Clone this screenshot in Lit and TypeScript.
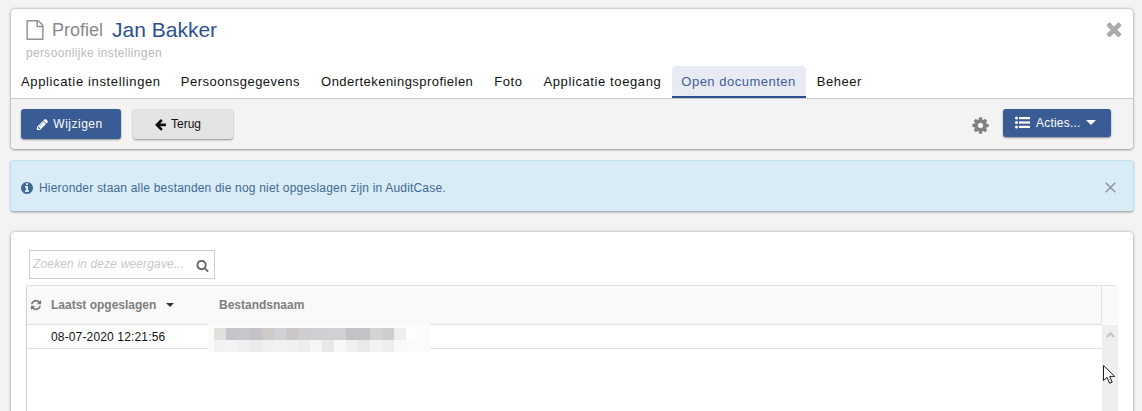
import { LitElement, html, css, svg } from "lit";
import { customElement } from "lit/decorators.js";

const P = {
  file: "M1596 380q28 28 48 76t20 88v1152q0 40-28 68t-68 28h-1344q-40 0-68-28t-28-68v-1600q0-40 28-68t68-28h896q40 0 88 20t76 48zm-444-244v376h376q-10-29-22-41l-313-313q-12-12-41-22zm384 1528v-1024h-416q-40 0-68-28t-28-68v-416h-768v1536h1280z",
  times: "M1490 1322q0 40-28 68l-136 136q-28 28-68 28t-68-28l-294-294-294 294q-28 28-68 28t-68-28l-136-136q-28-28-28-68t28-68l294-294-294-294q-28-28-28-68t28-68l136-136q28-28 68-28t68 28l294 294 294-294q28-28 68-28t68 28l136 136q28 28 28 68t-28 68l-294 294 294 294q28 28 28 68z",
  arrow: "M1664 896v128q0 53-32.5 90.5t-84.5 37.5h-704l293 294q38 36 38 90t-38 90l-75 76q-37 37-90 37-52 0-91-37l-651-652q-37-37-37-90 0-52 37-91l651-650q38-38 91-38 52 0 90 38l75 74q38 38 38 91t-38 91l-293 293h704q52 0 84.5 37.5t32.5 90.5z",
  pencil: "M491 1536l91-91-235-235-91 91v107h128v128h107zm523-928q0-22-22-22-10 0-17 7l-542 542q-7 7-7 17 0 22 22 22 10 0 17-7l542-542q7-7 7-17zm-54-192l416 416-832 832h-416v-416zm683 96q0 53-37 90l-166 166-416-416 166-165q36-38 90-38 53 0 91 38l235 234q37 39 37 91z",
  cog: "M1152 896q0-106-75-181t-181-75-181 75-75 181 75 181 181 75 181-75 75-181zm512-109v222q0 12-8 23t-20 13l-185 28q-19 54-39 91 35 50 107 138 10 12 10 25t-9 23q-27 37-99 108t-94 71q-12 0-26-9l-138-108q-44 23-91 38-16 136-29 186-7 28-36 28h-222q-14 0-24.5-8.5t-11.5-21.5l-28-184q-49-16-90-37l-141 107q-10 9-25 9-14 0-25-11-126-114-165-168-7-10-7-23 0-12 8-23 15-21 51-66.5t54-70.5q-27-50-41-99l-183-27q-13-2-21-12.5t-8-23.5v-222q0-12 8-23t19-13l186-28q14-46 39-92-40-57-107-138-10-12-10-24 0-10 9-23 26-36 98.5-107.5t94.5-71.5q13 0 26 10l138 107q44-23 91-38 16-136 29-186 7-28 36-28h222q14 0 24.5 8.5t11.5 21.5l28 184q49 16 90 37l142-107q9-9 24-9 13 0 25 10 129 119 165 170 7 8 7 22 0 12-8 23-15 21-51 66.5t-54 70.5q26 50 41 98l183 28q13 2 21 12.5t8 23.5z",
  info: "M1152 1376v-160q0-14-9-23t-23-9h-96v-512q0-14-9-23t-23-9h-320q-14 0-23 9t-9 23v160q0 14 9 23t23 9h96v320h-96q-14 0-23 9t-9 23v160q0 14 9 23t23 9h448q14 0 23-9t9-23zm-128-896v-160q0-14-9-23t-23-9h-192q-14 0-23 9t-9 23v160q0 14 9 23t23 9h192q14 0 23-9t9-23zm640 416q0 209-103 385.5t-279.5 279.5-385.5 103-385.5-103-279.5-279.5-103-385.5 103-385.5 279.5-279.5 385.5-103 385.5 103 279.5 279.5 103 385.5z",
  search: "M1216 832q0-185-131.5-316.5t-316.5-131.5-316.5 131.5-131.5 316.5 131.5 316.5 316.5 131.5 316.5-131.5 131.5-316.5zm512 832q0 52-38 90t-90 38q-54 0-90-38l-343-342q-179 124-399 124-143 0-273.5-55.5t-225-150-150-225-55.5-273.5 55.5-273.5 150-225 225-150 273.5-55.5 273.5 55.5 225 150 150 225 55.5 273.5q0 220-124 399l343 343q37 37 37 90z",
  refresh: "M1639 1056q0 5-1 7-64 268-268 434.5t-478 166.5q-146 0-282.5-55t-243.5-157l-129 129q-19 19-45 19t-45-19-19-45v-448q0-26 19-45t45-19h448q26 0 45 19t19 45-19 45l-137 137q71 66 161 102t187 36q134 0 250-65t186-179q11-17 53-117 8-23 30-23h192q13 0 22.5 9.5t9.5 22.5zm25-800v448q0 26-19 45t-45 19h-448q-26 0-45-19t-19-45 19-45l138-138q-148-137-349-137-134 0-250 65t-186 179q-11 17-53 117-8 23-30 23h-199q-13 0-22.5-9.5t-9.5-22.5v-7q65-268 270-434.5t480-166.5q146 0 284 55.5t245 156.5l130-129q19-19 45-19t45 19 19 45z",
};

const icon = (d: string, size: number, color: string, box = "0 0 1792 1792") =>
  html`<svg class="ico" width=${size} height=${size} viewBox=${box} style="color:${color}"><path fill="currentColor" d=${d}></path></svg>`;

const TABS: [string, number][] = [
  ["Applicatie instellingen", 0.64],
  ["Persoonsgegevens", 0.5],
  ["Ondertekeningsprofielen", 0.46],
  ["Foto", 0.55],
  ["Applicatie toegang", 0.6],
  ["Open documenten", 0.5],
  ["Beheer", 0.55],
];
const MOSAIC = [
  ["#e0e0dd", "#c6c5cc", "#c8c7cc", "#c4c3c7", "#cdcac9", "#d0d2d7", "#cbc7c9", "#cfcdd1", "#d0cfd3", "#d1d0d3", "#d1d0d3", "#c4c2c6", "#c5c3c6", "#d3d3d6", "#cfcdcd", "#eeeef2", "#fdfdfd"],
  ["#f2f2f2", "#f3f3f3", "#efefef", "#ebebef", "#f0f0f0", "#f2f2f3", "#f0f0f1", "#ededee", "#f6f6f6", "#e8e8e8", "#f8f8f8", "#f0f0f1", "#e9e9e9", "#f2f2f2", "#eeeeee", "#f9f9f9", "#fbfbfb"],
];

@customElement("app-root")
export class AppRoot extends LitElement {
  static styles = css`
    :host { display: block; height: 411px; overflow: hidden; background: #f3f3f3; font-family: "Liberation Sans", Arial, sans-serif; position: relative; }
    * { box-sizing: border-box; }
    .ico { display: block; flex: none; }
    .card { background: #fff; border-radius: 4px; margin: 0 9px 0 11px; box-shadow: 0 0 3px rgba(0,0,0,.35), 0 1px 2px rgba(0,0,0,.25); }
    .head { margin-top: 9px; display: block; overflow: hidden; }
    .top { position: relative; height: 57px; padding: 10px 0 0 14px; }
    .title { display: flex; align-items: center; height: 22px; }
    .profiel { font-size: 18px; color: #8a8a8a; margin-left: 7px; }
    .name { font-size: 21px; color: #2d5190; margin-left: 9px; }
    .sub { font-size: 12px; letter-spacing: .34px; color: #bbb; margin: 5px 0 0 1px; line-height: 14px; }
    .close { position: absolute; right: 8px; top: 9px; }
    .tabs { display: flex; height: 32px; border-bottom: 1px solid #c8c8c8; box-sizing: content-box; }
    .tab { font-size: 13px; color: #111; padding: 0 10px; line-height: 32px; height: 32px; margin-right: 1px; white-space: nowrap; }
    .tab:first-child { margin-right: 0; }
    .tab.on { background: #e9ebf4; color: #3f5ea0; border-bottom: 2px solid #2b4e8e; border-radius: 4px 4px 0 0; padding: 0 10px 0 9px; }
    .bar { background: #f3f3f3; height: 50px; display: flex; align-items: flex-start; padding: 10px 22px 0 10px; }
    .btn { display: flex; align-items: center; justify-content: center; gap: 4px; width: 100px; height: 30px; border-radius: 3px; font-size: 12px; box-shadow: 0 1px 2px rgba(0,0,0,.4); }
    .pri { background: #3a5c94; color: #fff; letter-spacing: .5px; padding-right: 3px; }
    .sec { background: #e4e4e4; color: #111; margin-left: 12px; gap: 4px; padding-right: 11px; }
    .spacer { flex: 1; }
    .gear { margin: 7px 13px 0 0; }
    .acts { width: 108px; height: 28px; justify-content: flex-start; padding: 0 0 1px 12px; gap: 6px; letter-spacing: .2px; }
    .caret { width: 0; height: 0; border-left: 5px solid transparent; border-right: 5px solid transparent; border-top: 5px solid currentColor; }
    .acts .caret { margin-left: 0; }
    .alert { margin: 11px 8px 0 10px; height: 52px; background: #d9ecf6; border: 1px solid #bfe3f2; border-bottom-color: #a9b5bb; border-radius: 4px; display: flex; align-items: center; padding: 3px 17px 0 9px; color: #3f6a94; font-size: 12px; letter-spacing: .19px; box-shadow: 0 1px 2px rgba(0,0,0,.2); }
    .alert span { margin-left: 5px; flex: 1; }
    .alert svg.x { display: block; }
    .panel { margin-top: 20px; height: 300px; padding: 18px 15px 0 15px; }
    .search { margin-left: 3px; width: 186px; height: 29px; border: 1px solid #ccc; display: flex; align-items: center; padding: 0 5px 0 3px; justify-content: space-between; }
    .search i { font-size: 12px; letter-spacing: .15px; color: #c8c8c8; white-space: nowrap; margin-top: -2px; }
    .search .ico { margin-top: 2px; }
    .grid { margin-top: 6px; border-left: 1px solid #d0d0d0; border-top: 1px solid #e2e2e2; border-radius: 3px 3px 0 0; position: relative; height: 200px; }
    .ghead { height: 39px; background: #f9f9f9; display: flex; align-items: center; border-bottom: 1px solid #e2e2e2; font-size: 12px; font-weight: bold; color: #7f7f7f; margin-right: 16px; border-right: 1px solid #e2e2e2; padding-left: 3px; position: relative; }
    .gcorner { position: absolute; right: -17px; top: 0; width: 16px; height: 38px; background: #f9f9f9; }
    .col1 { width: 177px; display: flex; align-items: center; }
    .col1 b { margin-left: 9px; font-weight: bold; }
    .col1 .caret { margin-left: 10px; border-top-color: #333; border-width: 4px 4px 0 4px; border-left-color: transparent; border-right-color: transparent; }
    .grow { position: relative; height: 24px; margin-right: 16px; border-bottom: 1px solid #e2e2e2; font-size: 12px; color: #111; line-height: 25px; padding-left: 24px; letter-spacing: .15px; }
    .scroll { position: absolute; right: 0; top: 39px; width: 16px; height: 200px; background: #eee; display: flex; justify-content: center; padding-top: 7px; }
    .mosaic { position: absolute; left: 181px; top: -2px; width: 222px; height: 29px; background: #fbfbfb; padding: 5px 0 0 6px; }
    .mrow { display: flex; height: 12px; }
    .mrow div { width: 12px; height: 12px; }
    .cursor { position: absolute; left: 1103px; top: 365px; }
  `;

  render() {
    return html`
      <div class="card head">
        <div class="top">
          <div class="title">
            ${icon(P.file, 20, "#8f8f8f")}
            <span class="profiel">Profiel</span><span class="name">Jan Bakker</span>
          </div>
          <div class="sub">persoonlijke instellingen</div>
          <div class="close">${icon(P.times, 22, "#aaa")}</div>
        </div>
        <div class="tabs">
          ${TABS.map(([t, ls]) => html`<div class="tab ${t === "Open documenten" ? "on" : ""}" style="letter-spacing:${ls}px">${t}</div>`)}
        </div>
        <div class="bar">
          <div class="btn pri">${icon(P.pencil, 13, "#fff")}<span>Wijzigen</span></div>
          <div class="btn sec">${icon(P.arrow, 13, "#111")}<span>Terug</span></div>
          <div class="spacer"></div>
          <div class="gear">${icon(P.cog, 19, "#808080")}</div>
          <div class="btn pri acts">
            <svg class="ico" width="15" height="13" viewBox="0 0 15 13" fill="#fff">
              ${svg`<circle cx="1.5" cy="2" r="1.5"/><circle cx="1.5" cy="6.5" r="1.5"/><circle cx="1.5" cy="11" r="1.5"/><rect x="4" y="1" width="11" height="2.2"/><rect x="4" y="5.4" width="11" height="2.2"/><rect x="4" y="9.8" width="11" height="2.2"/>`}
            </svg>
            <span>Acties...</span>
            <div class="caret"></div>
          </div>
        </div>
      </div>

      <div class="alert">
        ${icon(P.info, 14, "#3f6a94")}
        <span>Hieronder staan alle bestanden die nog niet opgeslagen zijn in AuditCase.</span>
        <svg class="x" width="11" height="11" viewBox="0 0 11 11">${svg`<path d="M.7.7l9.6 9.6M10.3.7L.7 10.3" stroke="#8a959e" stroke-width="1.5" fill="none"/>`}</svg>
      </div>

      <div class="card panel">
        <div class="search"><i>Zoeken in deze weergave...</i>${icon(P.search, 13, "#666")}</div>
        <div class="grid">
          <div class="ghead">
            ${icon(P.refresh, 12, "#777")}
            <div class="col1"><b>Laatst opgeslagen</b><div class="caret"></div></div>
            <div>Bestandsnaam</div>
            <div class="gcorner"></div>
          </div>
          <div class="grow">
            08-07-2020 12:21:56
            <div class="mosaic">
              ${MOSAIC.map((r) => html`<div class="mrow">${r.map((c) => html`<div style="background:${c}"></div>`)}</div>`)}
            </div>
          </div>
          <div class="scroll">
            <svg width="9" height="6" viewBox="0 0 9 6">${svg`<path d="M.8 5L4.5 1.2 8.2 5" stroke="#c4c4c4" stroke-width="2" fill="none"/>`}</svg>
          </div>
        </div>
      </div>

      <svg class="cursor" width="13" height="20" viewBox="0 0 13 20">
        ${svg`<path d="M.5.5v15l3.6-3.2 2.5 6 2.6-1.1-2.5-5.8h5z" fill="#fff" stroke="#222" stroke-width="1"/>`}
      </svg>
    `;
  }
}
